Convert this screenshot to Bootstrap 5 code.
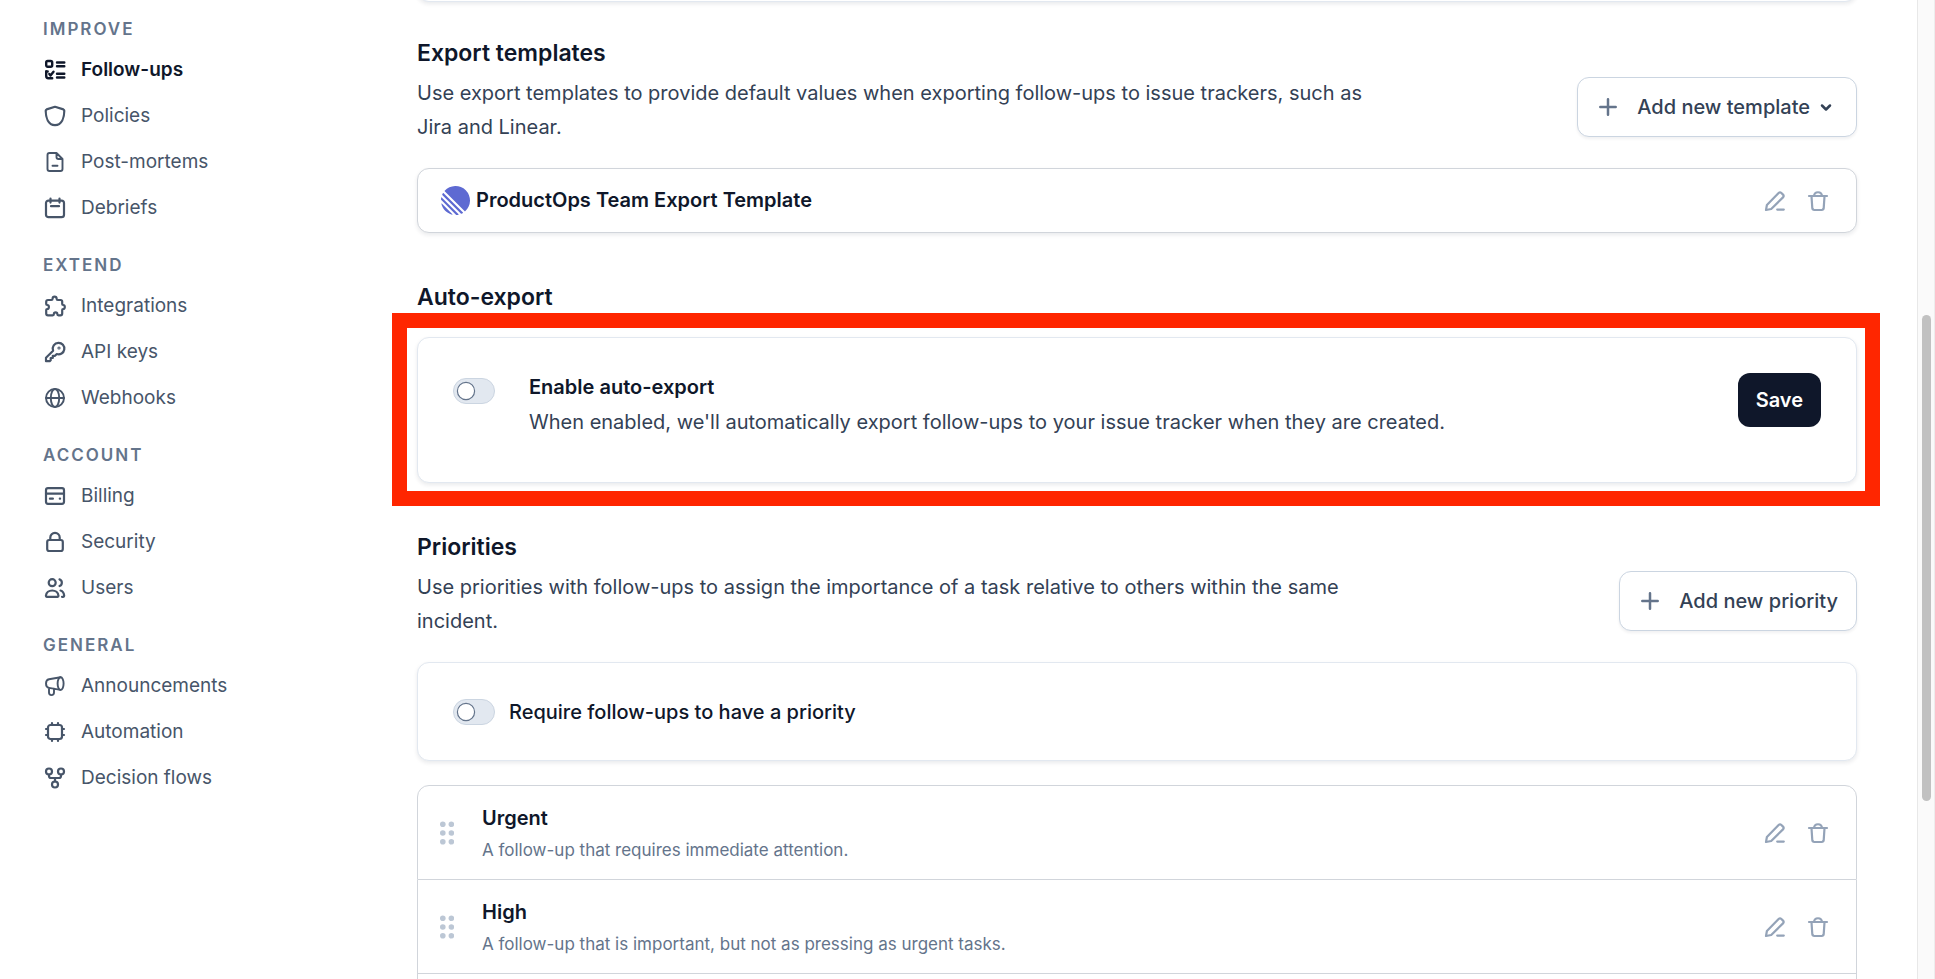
<!DOCTYPE html>
<html lang="en">
<head>
<meta charset="utf-8">
<meta name="viewport" content="width=device-width, initial-scale=1">
<title>Follow-ups settings</title>
<link href="https://cdn.jsdelivr.net/npm/bootstrap@5.3.0/dist/css/bootstrap.min.css" rel="stylesheet">
<style>
  :root { --ink: #0f172a; --slate: #334155; --muted: #64748b; --line: #e2e8f0; --line-strong: #d1d5db; }
  body { font-family: Inter, sans-serif; font-size: 20px; line-height: 34px; color: var(--slate); background: #fff; }
  svg { fill: none; stroke: currentColor; stroke-width: 2.2; stroke-linecap: round; stroke-linejoin: round; flex: none; display: block; }

  .side-nav { width: 417px; padding-left: 43px; }
  .side-title { font-size: 17px; line-height: 24px; font-weight: 600; letter-spacing: 2px; color: var(--muted); padding: 22px 0 6px; margin: 0; }
  .side-nav section:first-child .side-title { padding-top: 17px; }
  .side-link { font-size: 19px; line-height: 46px; color: #475569; text-decoration: none; gap: 14px; }
  .side-link svg { width: 24px; height: 24px; }
  .side-link.active { color: var(--ink); font-weight: 600; }

  main { padding-right: 60px; min-width: 0; }
  .section-top { padding-top: 35px; }
  .section-title { font-size: 23px; line-height: 32px; font-weight: 600; color: var(--ink); margin: 0; }
  .section-head { margin: 7px 0 24px; }
  .section-text { max-width: 975px; margin: 0; }
  .panel { border: 1px solid var(--line); border-radius: 12px; background: #fff; box-shadow: 0 2px 4px rgba(15, 23, 42, .09); }
  .panel-strong { border-color: var(--line-strong); }
  .panel-above { height: 60px; margin-top: -58px; }
  .item-title { font-size: 20px; font-weight: 600; color: var(--ink); margin: 0; }

  .btn-add { height: 60px; margin-top: 1px; padding: 0 18px; border: 1px solid #cbd5e1; border-radius: 12px; background: #fff; color: var(--slate); font-size: 20px; font-weight: 500; box-shadow: 0 2px 3px rgba(15, 23, 42, .06); white-space: nowrap; }
  .btn-add svg { width: 24px; height: 24px; stroke-width: 2.5; }
  .btn-add .plus { color: var(--muted); margin-right: 17px; }
  .btn-save { height: 54px; padding: 0 17px; border-radius: 12px; background: var(--ink); color: #fff; font-size: 20px; font-weight: 600; }
  .btn-icon { padding: 0; border: 0; background: none; color: #94a3b8; }
  .btn-icon svg { width: 24px; height: 24px; }
  .row-actions { gap: 19px; }

  .highlight { position: relative; }
  .highlight::after { content: ""; position: absolute; inset: -25px -24px -24px -26px; border: 15px solid #ff2600; pointer-events: none; }

  .switch.form-check-input { width: 42px; height: 26px; margin: 0; flex: none; border: 1px solid #cbd5e1; border-radius: 13px; background-color: var(--line); background-size: 22px 22px; background-position: 1px center; background-repeat: no-repeat; background-image: url("data:image/svg+xml,%3csvg xmlns='http://www.w3.org/2000/svg' viewBox='0 0 22 22'%3e%3ccircle cx='11' cy='11' r='8.6' fill='white' stroke='%2364748b' stroke-width='1.2'/%3e%3c/svg%3e"); }

  .template-row { padding: 15px 26px 15px 23px; }
  .template-name { line-height: 33px; padding-left: 6px; }
  .linear-logo { fill: #5e6ad2; stroke: none; }
  .auto-card { margin-top: 24px; padding: 35px 35px 43px; }
  .auto-card .switch { margin: 5px 34px 0 0; }
  .auto-card .item-title { line-height: 28px; margin-bottom: 4px; }
  .require-card { padding: 32px 35px 31px; gap: 14px; color: var(--ink); font-weight: 500; }

  .priority { padding: 16px 26px 15px 22px; border-color: var(--line-strong); border-radius: 0; }
  .priority:first-child { border-top-left-radius: 12px; border-top-right-radius: 12px; }
  .priority .item-title { line-height: 32px; }
  .priority-text { font-size: 17px; line-height: 28px; color: var(--muted); margin: 2px 0 0; }
  .grip { width: 14px; height: 24px; margin-right: 28px; fill: #bcc7d5; stroke: none; }

  .scroll-track { width: 18px; background: #fafafa; border-left: 1px solid #e8e8e8; border-right: 1px solid #ededed; padding: 0 3px 0 4px; }
  .scroll-thumb { background: #c1c1c1; border-radius: 5px; }
</style>
</head>
<body class="d-flex vh-100 overflow-hidden">

<svg width="0" height="0" class="position-absolute" aria-hidden="true">
  <symbol id="i-follow" viewBox="0 0 24 24"><g stroke-width="2.400"><rect x="3.200" y="3" width="6" height="5.800" rx="1.500"/><path d="M3.200 13.200v4.900q0 2.200 2.200 2.200h3.800M3.200 13.500h1.500M6.300 16l1.200 1.500 3-3.800"/><path d="M14 4.500h7.300M14 8.200h7.300M14 15.800h7.300M14 19.500h7.300"/></g></symbol>
  <symbol id="i-shield" viewBox="0 0 24 24"><path d="M12 2.800 20.400 5.400q.9.400.9 1.400C21.200 13.500 19 21 12 21.200 5 21 2.800 13.500 2.700 6.800q0-1 .9-1.400z"/></symbol>
  <symbol id="i-doc" viewBox="0 0 24 24"><path stroke-width="1.900" d="M6.500 3h7l6 6v10q0 2-2 2h-11q-2 0-2-2V5q0-2 2-2zM13.500 3v4q0 2 2 2h4M9.500 15.700h5"/></symbol>
  <symbol id="i-calendar" viewBox="0 0 24 24"><rect x="3" y="4.600" width="18" height="16.600" rx="2.500"/><path d="M7.500 2.600v4M16.500 2.600v4M8 10.200h8"/></symbol>
  <symbol id="i-puzzle" viewBox="0 0 24 24"><path d="M5 6h3.300c.8 0 1.300-.5 1.300-1.200C9.600 3.600 10.300 2.700 11.600 2.700s2 .9 2 2.100c0 .7.500 1.200 1.300 1.200H17.600q1.600 0 1.600 1.600V10c0 .7.300 1 .9 1 1.100 0 1.700.8 1.700 2s-.6 2-1.700 2c-.6 0-.9.400-.9 1v3.500q0 1.800-1.800 1.800h-1.900c-.8 0-1.200-.5-1.200-1.200 0-1-.6-1.700-1.700-1.700s-1.700.7-1.700 1.700c0 .7-.5 1.200-1.200 1.200H5q-1.800 0-1.800-1.800V16c0-.6.400-1 1-1 1 0 1.700-.8 1.700-2s-.7-2-1.700-2c-.6 0-1-.4-1-1V7.800Q3.200 6 5 6z"/></symbol>
  <symbol id="i-key" viewBox="0 0 24 24"><path d="M15.500 2.900a5.700 5.700 0 1 1-1.700 11.100L12 15.800h-2.200v2.200H7.700v2.200l-1 1H3v-3.400l7.100-7.100A5.700 5.700 0 0 1 15.500 2.900z"/><circle cx="16" cy="8" r=".5"/></symbol>
  <symbol id="i-globe" viewBox="0 0 24 24"><g stroke-width="1.900"><circle cx="12" cy="12" r="9"/><ellipse cx="12" cy="12" rx="4.200" ry="9"/><path d="M3 12h18"/></g></symbol>
  <symbol id="i-card" viewBox="0 0 24 24"><rect x="3" y="4.200" width="18" height="15.600" rx="2"/><path d="M3 9.600h18M6.900 14.700h3M16.800 14.700h.3"/></symbol>
  <symbol id="i-lock" viewBox="0 0 24 24"><rect x="4.200" y="10" width="15.600" height="11" rx="2"/><path d="M7.300 10V7.500a4.700 4.700 0 0 1 9.400 0V10"/></symbol>
  <symbol id="i-users" viewBox="0 0 24 24"><circle cx="9.200" cy="6.700" r="3.500"/><path d="M3.700 20.800c-.6 0-.8-.4-.8-1 .3-3.300 3-5.300 6.300-5.300s6 2 6.300 5.300c0 .6-.2 1-.8 1zM16.500 3.400a3.500 3.500 0 0 1 0 6.600M17.500 14.500c2.200.6 3.500 2.700 3.700 5.300 0 .6-.3 1-.9 1h-1.300"/></symbol>
  <symbol id="i-megaphone" viewBox="0 0 24 24"><g stroke-width="1.900"><ellipse cx="17.600" cy="9.600" rx="3" ry="6.300"/><path d="M17.600 3.300 6 5.300C4 5.700 3 7.600 3 9.600s1.200 4 3 4.300l11.600 2M6 14v4.600a2.500 2.500 0 0 0 5 0v-4"/></g></symbol>
  <symbol id="i-chip" viewBox="0 0 24 24"><rect x="5" y="5" width="14" height="14" rx="2.500"/><path d="M9 5V3M15 5V3M9 21V19M15 21V19M5 9H3M5 15H3M21 9H19M21 15H19"/></symbol>
  <symbol id="i-flow" viewBox="0 0 24 24"><circle cx="6" cy="5.500" r="3"/><circle cx="18" cy="5.500" r="3"/><circle cx="12" cy="18.500" r="3"/><path d="M6 8.500v1.500q0 2 2 2h8q2 0 2-2V8.500M12 12v3.500"/></symbol>
  <symbol id="i-pencil" viewBox="0 0 24 24"><path d="M3 21l.9-5L15.600 4q1.400-1.300 2.800 0l1.600 1.600q1.300 1.400 0 2.800L8.200 20zM14.200 20.600h6.600"/></symbol>
  <symbol id="i-trash" viewBox="0 0 24 24"><path d="M3 7h18M8 7c.4-5 7.600-5 8 0M5.500 7.200l.8 12q.2 1.800 2 1.800h7.400q1.800 0 2-1.800l.8-12"/></symbol>
  <symbol id="i-plus" viewBox="0 0 24 24"><path d="M12 4.300v15.400M4.300 12h15.400"/></symbol>
  <symbol id="i-chevron" viewBox="0 0 24 24"><path d="M8 10.500l4 4 4-4"/></symbol>
  <symbol id="i-grip" viewBox="0 0 14 24"><circle cx="2.800" cy="3.300" r="2.800"/><circle cx="11.400" cy="3.300" r="2.800"/><circle cx="2.800" cy="12" r="2.800"/><circle cx="11.400" cy="12" r="2.800"/><circle cx="2.800" cy="20.700" r="2.800"/><circle cx="11.400" cy="20.700" r="2.800"/></symbol>
</svg>

<nav class="side-nav flex-shrink-0" aria-label="Settings">
  <section>
    <h2 class="side-title">IMPROVE</h2>
    <a href="#" class="side-link active d-flex align-items-center" aria-current="page"><svg><use href="#i-follow"/></svg>Follow-ups</a>
    <a href="#" class="side-link d-flex align-items-center"><svg><use href="#i-shield"/></svg>Policies</a>
    <a href="#" class="side-link d-flex align-items-center"><svg><use href="#i-doc"/></svg>Post-mortems</a>
    <a href="#" class="side-link d-flex align-items-center"><svg><use href="#i-calendar"/></svg>Debriefs</a>
  </section>
  <section>
    <h2 class="side-title">EXTEND</h2>
    <a href="#" class="side-link d-flex align-items-center"><svg><use href="#i-puzzle"/></svg>Integrations</a>
    <a href="#" class="side-link d-flex align-items-center"><svg><use href="#i-key"/></svg>API keys</a>
    <a href="#" class="side-link d-flex align-items-center"><svg><use href="#i-globe"/></svg>Webhooks</a>
  </section>
  <section>
    <h2 class="side-title">ACCOUNT</h2>
    <a href="#" class="side-link d-flex align-items-center"><svg><use href="#i-card"/></svg>Billing</a>
    <a href="#" class="side-link d-flex align-items-center"><svg><use href="#i-lock"/></svg>Security</a>
    <a href="#" class="side-link d-flex align-items-center"><svg><use href="#i-users"/></svg>Users</a>
  </section>
  <section>
    <h2 class="side-title">GENERAL</h2>
    <a href="#" class="side-link d-flex align-items-center"><svg><use href="#i-megaphone"/></svg>Announcements</a>
    <a href="#" class="side-link d-flex align-items-center"><svg><use href="#i-chip"/></svg>Automation</a>
    <a href="#" class="side-link d-flex align-items-center"><svg><use href="#i-flow"/></svg>Decision flows</a>
  </section>
</nav>

<main class="flex-grow-1">
  <div class="panel panel-above"></div>

  <section class="section-top">
    <h3 class="section-title">Export templates</h3>
    <div class="section-head d-flex justify-content-between align-items-start">
      <p class="section-text">Use export templates to provide default values when exporting follow-ups to issue trackers, such as Jira and Linear.</p>
      <button type="button" class="btn btn-add d-flex align-items-center"><svg class="plus"><use href="#i-plus"/></svg>Add new template<svg class="ms-1"><use href="#i-chevron"/></svg></button>
    </div>
    <div class="panel panel-strong template-row d-flex align-items-center">
      <svg class="linear-logo" width="29" height="29" viewBox="0 0 100 100"><path d="M1.200 61.500c-.2-1 1-1.600 1.700-.9l36.500 36.500c.7.700.1 1.900-.9 1.700C20 94.500 5.500 80 1.200 61.500zM0 46.900c0 .3.100.5.300.7l52.100 52.100c.2.200.4.300.7.300 2.400-.2 4.700-.5 7-.9.800-.2 1-1.100.5-1.700L2.600 39.400c-.6-.6-1.500-.3-1.700.5-.4 2.300-.7 4.600-.9 7zM4.200 29.700c-.2.400-.1.800.2 1.100l64.800 64.800c.3.300.7.400 1.100.2 1.800-.8 3.500-1.700 5.200-2.700.6-.3.600-1.100.2-1.500L8.400 24.300c-.4-.4-1.200-.3-1.500.2-1 1.700-1.900 3.400-2.700 5.200zM12.700 18.100c-.4-.4-.4-1 0-1.400A50 50 0 1 1 83.300 87.300c-.4.400-1 .4-1.400 0z"/></svg>
      <h4 class="item-title template-name flex-grow-1">ProductOps Team Export Template</h4>
      <div class="row-actions d-flex">
        <button type="button" class="btn-icon" aria-label="Edit"><svg><use href="#i-pencil"/></svg></button>
        <button type="button" class="btn-icon" aria-label="Delete"><svg><use href="#i-trash"/></svg></button>
      </div>
    </div>
  </section>

  <section class="pt-5">
    <h3 class="section-title">Auto-export</h3>
    <div class="panel highlight auto-card d-flex align-items-start">
      <input class="form-check-input switch" type="checkbox" role="switch" id="auto-export">
      <div class="flex-grow-1">
        <label class="item-title d-block" for="auto-export">Enable auto-export</label>
        <p class="mb-0">When enabled, we'll automatically export follow-ups to your issue tracker when they are created.</p>
      </div>
      <button type="button" class="btn btn-save">Save</button>
    </div>
  </section>

  <section class="pt-5">
    <h3 class="section-title">Priorities</h3>
    <div class="section-head d-flex justify-content-between align-items-start">
      <p class="section-text">Use priorities with follow-ups to assign the importance of a task relative to others within the same incident.</p>
      <button type="button" class="btn btn-add d-flex align-items-center"><svg class="plus"><use href="#i-plus"/></svg>Add new priority</button>
    </div>
    <div class="panel require-card d-flex align-items-center mb-4">
      <input class="form-check-input switch" type="checkbox" role="switch" id="require-priority">
      <label for="require-priority">Require follow-ups to have a priority</label>
    </div>
    <div class="list-group">
      <div class="list-group-item priority d-flex align-items-center">
        <svg class="grip"><use href="#i-grip"/></svg>
        <div class="flex-grow-1">
          <h4 class="item-title">Urgent</h4>
          <p class="priority-text">A follow-up that requires immediate attention.</p>
        </div>
        <div class="row-actions d-flex">
          <button type="button" class="btn-icon" aria-label="Edit Urgent"><svg><use href="#i-pencil"/></svg></button>
          <button type="button" class="btn-icon" aria-label="Delete Urgent"><svg><use href="#i-trash"/></svg></button>
        </div>
      </div>
      <div class="list-group-item priority d-flex align-items-center">
        <svg class="grip"><use href="#i-grip"/></svg>
        <div class="flex-grow-1">
          <h4 class="item-title">High</h4>
          <p class="priority-text">A follow-up that is important, but not as pressing as urgent tasks.</p>
        </div>
        <div class="row-actions d-flex">
          <button type="button" class="btn-icon" aria-label="Edit High"><svg><use href="#i-pencil"/></svg></button>
          <button type="button" class="btn-icon" aria-label="Delete High"><svg><use href="#i-trash"/></svg></button>
        </div>
      </div>
      <div class="list-group-item priority"></div>
    </div>
  </section>
</main>

<div class="scroll-track flex-shrink-0 d-flex flex-column" aria-hidden="true">
  <div style="height:32.2%"></div>
  <div class="scroll-thumb" style="height:49.6%"></div>
</div>

<script src="https://cdn.jsdelivr.net/npm/bootstrap@5.3.0/dist/js/bootstrap.bundle.min.js"></script>
</body>
</html>
